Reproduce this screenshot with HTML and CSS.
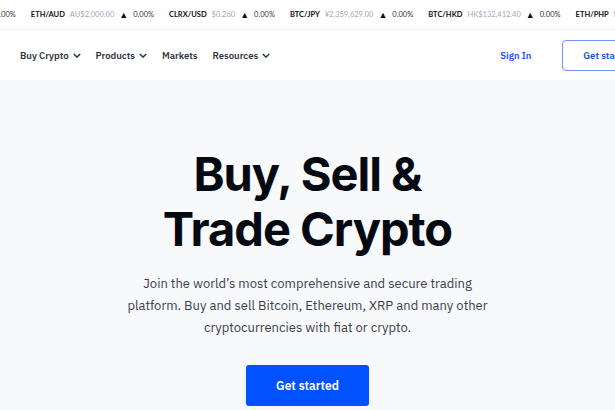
FILE: index.html
```html
<!DOCTYPE html>
<html lang="en">
<head>
    <meta charset="UTF-8">
    <meta name="viewport" content="width=device-width, initial-scale=1.0">
    <title>Buy, Sell & Trade Crypto</title>
    <link rel="stylesheet" href="styles.css">
</head>
<body>
    <div class="ticker">
        <div class="ticker-track">
            <div class="tick"><span class="change">0.00%</span></div>
            <div class="tick"><span class="pair">ETH/AUD</span><span class="price">AU$2,000.00</span><span class="up">&#9650;</span><span class="change">0.00%</span></div>
            <div class="tick"><span class="pair">CLRX/USD</span><span class="price">$0.260</span><span class="up">&#9650;</span><span class="change">0.00%</span></div>
            <div class="tick"><span class="pair">BTC/JPY</span><span class="price">¥2,359,629.00</span><span class="up">&#9650;</span><span class="change">0.00%</span></div>
            <div class="tick"><span class="pair">BTC/HKD</span><span class="price">HK$132,412.40</span><span class="up">&#9650;</span><span class="change">0.00%</span></div>
            <div class="tick"><span class="pair">ETH/PHP</span><span class="price">₱2,000.00</span></div>
        </div>
    </div>

    <nav class="nav">
        <ul class="menu">
            <li>Buy Crypto <svg class="chev" viewBox="0 0 10 6"><path d="M1 1l4 4 4-4" /></svg></li>
            <li>Products <svg class="chev" viewBox="0 0 10 6"><path d="M1 1l4 4 4-4" /></svg></li>
            <li>Markets</li>
            <li>Resources <svg class="chev" viewBox="0 0 10 6"><path d="M1 1l4 4 4-4" /></svg></li>
        </ul>
        <div class="actions">
            <a class="sign-in" href="#">Sign In</a>
            <a class="btn-outline" href="#">Get started</a>
        </div>
    </nav>

    <main class="hero">
        <h1>Buy, Sell &amp;<br>Trade Crypto</h1>
        <p>Join the world’s most comprehensive and secure trading platform. Buy and sell Bitcoin, Ethereum, XRP and many other cryptocurrencies with fiat or crypto.</p>
        <a class="btn-primary" href="#">Get started</a>
    </main>
</body>
</html>
```

FILE: styles.css
```css
body {
    margin: 0;
    background-color: #f8f9fb;
    font-family: "IBM Plex Sans", "Noto Sans", Arial, sans-serif;
    overflow: hidden;
}

a {
    text-decoration: none;
}

/* ticker */
.ticker {
    height: 29px;
    background-color: white;
    border-bottom: 1px solid #eef0f3;
    overflow: hidden;
    white-space: nowrap;
}

.ticker-track {
    display: flex;
    gap: 15px;
    margin-left: -5px;
    height: 29px;
    align-items: center;
    font-family: Lato, "Open Sans", sans-serif;
    font-size: 7.5px;
}

.tick {
    display: flex;
    align-items: center;
    gap: 5px;
}

.pair {
    font-weight: 700;
    color: #111;
}

.price {
    color: #a3a9b8;
}

.up {
    font-size: 9px;
    color: #111;
}

.change {
    color: #333;
}

/* nav */
.nav {
    display: flex;
    justify-content: space-between;
    align-items: center;
    height: 50px;
    background-color: white;
    padding-left: 20px;
}

.menu {
    display: flex;
    gap: 15px;
    list-style: none;
    margin: 0;
    padding: 0;
    font-size: 9.5px;
    font-weight: 600;
    color: #30353f;
}

.menu li {
    display: flex;
    align-items: center;
    gap: 4px;
}

.chev {
    width: 8px;
    height: 5px;
    fill: none;
    stroke: #30353f;
    stroke-width: 1.8;
}

.actions {
    display: flex;
    align-items: center;
    gap: 31px;
    margin-right: -39px;
}

.sign-in {
    color: #1652f0;
    font-size: 9.5px;
    font-weight: 600;
}

.btn-outline {
    display: block;
    padding: 8px 20px;
    border: 1px solid #6f94f5;
    border-radius: 4px;
    color: #1652f0;
    font-size: 9.5px;
    font-weight: 600;
}

/* hero */
.hero {
    display: flex;
    flex-direction: column;
    align-items: center;
    text-align: center;
    padding-top: 66px;
}

h1 {
    margin: 0;
    font-family: Inter, "Liberation Sans", sans-serif;
    font-size: 47px;
    font-weight: 700;
    line-height: 55px;
    letter-spacing: -1px;
    color: #050a12;
}

.hero p {
    max-width: 370px;
    margin: 17px 0 0;
    font-size: 13px;
    line-height: 22px;
    color: #3b404a;
}

.btn-primary {
    display: block;
    margin-top: 26px;
    width: 123px;
    height: 41px;
    line-height: 41px;
    background-color: #0052ff;
    color: white;
    font-size: 12px;
    font-weight: 600;
    border-radius: 3px;
    box-shadow: 0 2px 6px rgba(0, 0, 0, 0.08);
}
```
